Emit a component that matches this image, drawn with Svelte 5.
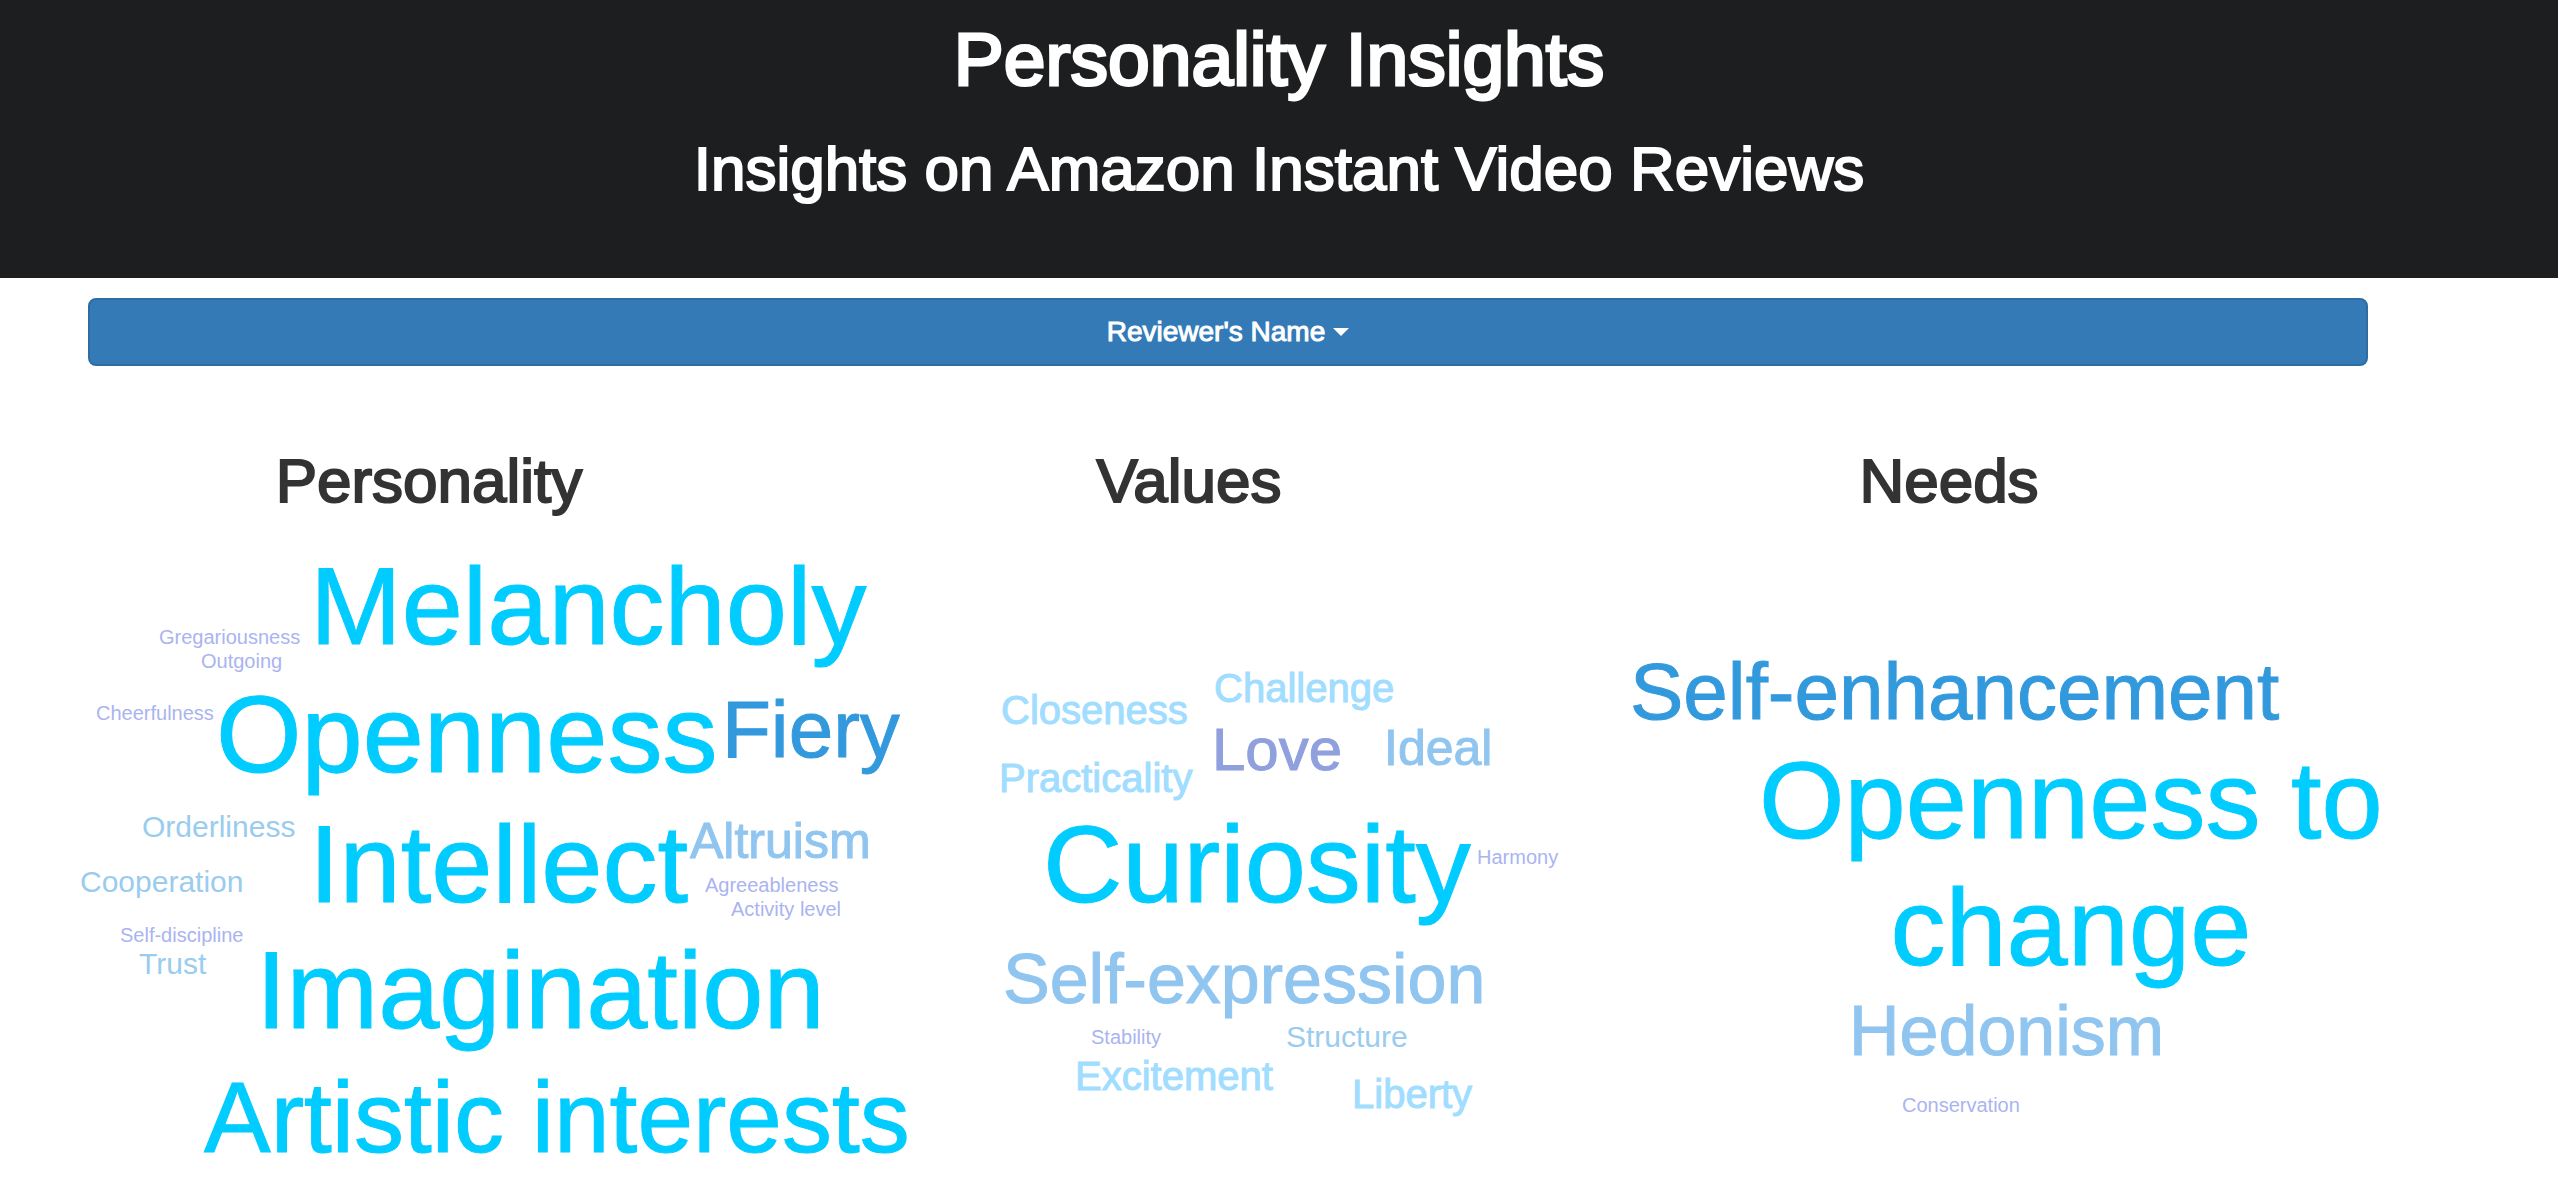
<script>
  // Words sit on a free canvas: x is the left edge and y the baseline, inside each cloud.
  // Rank sets both size and colour.
  const clouds = [
    {
      title: 'Personality',
      words: [
        { text: 'Melancholy', rank: 'w10', size: 110, x: 222, y: 131 },
        { text: 'Gregariousness', rank: 'w1', size: 20, x: 71, y: 131 },
        { text: 'Outgoing', rank: 'w1', size: 20, x: 113, y: 155 },
        { text: 'Cheerfulness', rank: 'w1', size: 20, x: 8, y: 207 },
        { text: 'Openness', rank: 'w10', size: 110, x: 128, y: 259 },
        { text: 'Fiery', rank: 'w7', size: 80, x: 634, y: 245 },
        { text: 'Orderliness', rank: 'w2', size: 30, x: 54, y: 325 },
        { text: 'Intellect', rank: 'w10', size: 110, x: 221, y: 389 },
        { text: 'Altruism', rank: 'w4', size: 50, x: 602, y: 346 },
        { text: 'Cooperation', rank: 'w2', size: 30, x: -8, y: 380 },
        { text: 'Agreeableness', rank: 'w1', size: 20, x: 617, y: 379 },
        { text: 'Activity level', rank: 'w1', size: 20, x: 643, y: 403 },
        { text: 'Self-discipline', rank: 'w1', size: 20, x: 32, y: 429 },
        { text: 'Trust', rank: 'w2', size: 30, x: 51, y: 462 },
        { text: 'Imagination', rank: 'w10', size: 110, x: 168, y: 515 },
        { text: 'Artistic interests', rank: 'w9', size: 100, x: 116, y: 639 }
      ]
    },
    {
      title: 'Values',
      words: [
        { text: 'Closeness', rank: 'w3', size: 40, x: 153, y: 211 },
        { text: 'Challenge', rank: 'w3', size: 40, x: 366, y: 189 },
        { text: 'Love', rank: 'w5', size: 60, x: 364, y: 257 },
        { text: 'Ideal', rank: 'w4', size: 50, x: 536, y: 253 },
        { text: 'Practicality', rank: 'w3', size: 40, x: 151, y: 279 },
        { text: 'Curiosity', rank: 'w10', size: 110, x: 195, y: 389 },
        { text: 'Harmony', rank: 'w1', size: 20, x: 629, y: 351 },
        { text: 'Self-expression', rank: 'w6', size: 70, x: 155, y: 491 },
        { text: 'Stability', rank: 'w1', size: 20, x: 243, y: 531 },
        { text: 'Structure', rank: 'w2', size: 30, x: 438, y: 535 },
        { text: 'Excitement', rank: 'w3', size: 40, x: 227, y: 577 },
        { text: 'Liberty', rank: 'w3', size: 40, x: 504, y: 595 }
      ]
    },
    {
      title: 'Needs',
      words: [
        { text: 'Self-enhancement', rank: 'w7', size: 80, x: 22, y: 207 },
        { text: 'Openness to\nchange', rank: 'w10', size: 110, x: 151, y: 325 },
        { text: 'Hedonism', rank: 'w6', size: 70, x: 241, y: 543 },
        { text: 'Conservation', rank: 'w1', size: 20, x: 294, y: 599 }
      ]
    }
  ];

  const lineHeight = 1.15;
  // Distance from the top of a line box to its baseline, in ems.
  const ascent = 0.905 + (lineHeight - 1.117) / 2;
  const top = (word) => Math.round(word.y - ascent * word.size);
</script>

<header class="banner">
  <h1>Personality Insights</h1>
  <h2>Insights on Amazon Instant Video Reviews</h2>
</header>

<main>
  <button type="button" class="picker" aria-haspopup="true">
    Reviewer's Name
    <span class="caret" aria-hidden="true"></span>
  </button>

  <div class="columns">
    {#each clouds as cloud}
      <section>
        <h2>{cloud.title}</h2>
        <div class="cloud">
          {#each cloud.words as word}
            <span class="word {word.rank}" style="left: {word.x}px; top: {top(word)}px">{word.text}</span>
          {/each}
        </div>
      </section>
    {/each}
  </div>
</main>

<style>
  :global(body) {
    background: #fff;
    color: #333;
    font-family: "Liberation Sans", Helvetica, Arial, sans-serif;
  }

  h1,
  h2 {
    margin: 0;
    font-weight: 400;
    text-align: center;
    -webkit-text-stroke: 2px currentColor;
  }

  h1 {
    font-size: 75px;
    line-height: 80px;
    -webkit-text-stroke-width: 3px;
  }

  h2 {
    font-size: 62px;
    line-height: 66px;
  }

  .banner {
    display: flex;
    flex-direction: column;
    gap: 37px;
    padding: 19px 0 76px;
    background: #1d1e20;
    color: #fff;
  }

  main {
    padding: 20px 190px 0 88px;
  }

  .picker {
    display: flex;
    align-items: center;
    justify-content: center;
    gap: 8px;
    box-sizing: border-box;
    width: 100%;
    height: 68px;
    border: 2px solid #2e6da4;
    border-radius: 8px;
    background: #337ab7;
    color: #fff;
    font: 28px "Liberation Sans", Helvetica, Arial, sans-serif;
    -webkit-text-stroke: 1px currentColor;
    cursor: pointer;
  }

  .caret {
    border-top: 8px solid;
    border-right: 8px solid transparent;
    border-left: 8px solid transparent;
  }

  .columns {
    display: grid;
    grid-template-columns: repeat(3, minmax(0, 1fr));
    padding-top: 82px;
  }

  section h2 {
    padding-right: 78px;
  }

  .cloud {
    position: relative;
    height: 679px;
    margin-top: -1px;
  }

  .word {
    position: absolute;
    line-height: 1.15;
    text-align: center;
    white-space: pre;
    -webkit-text-stroke: 1px currentColor;
  }

  .w1,
  .w2 {
    -webkit-text-stroke-width: 0;
  }

  .w1 { color: #aab4f0; font-size: 20px; }
  .w2 { color: #99ccee; font-size: 30px; }
  .w3 { color: #a0ddff; font-size: 40px; }
  .w4 { color: #90c5f0; font-size: 50px; }
  .w5 { color: #90a0dd; font-size: 60px; }
  .w6 { color: #90c5f0; font-size: 70px; }
  .w7 { color: #3399dd; font-size: 80px; }
  .w9 { color: #00ccff; font-size: 100px; }
  .w10 { color: #00ccff; font-size: 110px; }
</style>
